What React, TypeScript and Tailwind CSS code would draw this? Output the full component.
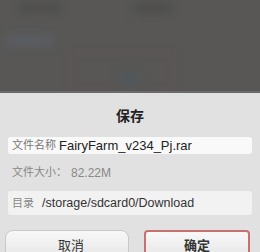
export default function App() {
  const font = { fontFamily: '"Liberation Sans", "Noto Sans CJK SC", sans-serif' };
  return (
    <div className="w-[260px] h-[252px] overflow-hidden flex flex-col bg-[#575655]" style={font}>
      <div className="relative h-[93px] shrink-0 overflow-hidden bg-[#585756]">
        <div className="absolute left-[20px] top-[4px] w-[40px] h-[8px] bg-[#4c4c4c] blur-[5px]" />
        <div className="absolute left-[135px] top-[4px] w-[35px] h-[8px] bg-[#4a4a4a] blur-[5px]" />
        <div className="absolute left-[5px] top-[36px] w-[48px] h-[10px] bg-[#5a5e64] blur-[5px]" />
        <div className="absolute left-[70px] top-[52px] w-[106px] h-[40px] border-2 border-[#625454] blur-[3px]" />
        <div className="absolute left-[120px] top-[74px] w-[20px] h-[10px] bg-[#50585c] blur-[5px]" />
        <div className="absolute left-0 right-0 bottom-0 h-[2px] bg-[#6a6a6a]" />
      </div>
      <div className="flex-1 bg-[#e1e1e1] flex flex-col px-[8px]">
        <div className="h-[44px] flex items-center justify-center text-[14px] font-bold text-[#222] pt-[2px]">保存</div>
        <div className="h-[17px] bg-[#f9f9f9] rounded-[3px] flex items-center px-[4px]">
          <span className="text-[11px] text-[#777]">文件名称</span>
          <span className="ml-[3px] text-[13px] text-[#222]">FairyFarm_v234_Pj.rar</span>
        </div>
        <div className="h-[37px] flex items-center px-[4px] text-[11px] text-[#888]">
          <span>文件大小：</span>
          <span className="ml-[4px] text-[12px]">82.22M</span>
        </div>
        <div className="h-[24px] bg-[#f2f2f2] rounded-[3px] flex items-center px-[4px]">
          <span className="text-[11px] text-[#888]">目录</span>
          <span className="ml-[8px] text-[12.5px] text-[#333]">/storage/sdcard0/Download</span>
        </div>
        <div className="mt-[15px] flex gap-[15px] -mx-[3px]">
          <div className="w-[124px] h-[30px] rounded-t-[8px] bg-gradient-to-b from-[#f8f8f8] to-[#e6e6e6] border border-[#c8c8c8] flex items-start justify-center pt-[5px] pl-[8px] text-[13px] text-[#333]">取消</div>
          <div className="w-[106px] h-[30px] rounded-t-[4px] bg-gradient-to-b from-[#f8f8f8] to-[#e6e6e6] border-2 border-[#c87070] flex items-start justify-center pt-[4px] text-[13px] font-bold text-[#333]">确定</div>
        </div>
      </div>
    </div>
  );
}
